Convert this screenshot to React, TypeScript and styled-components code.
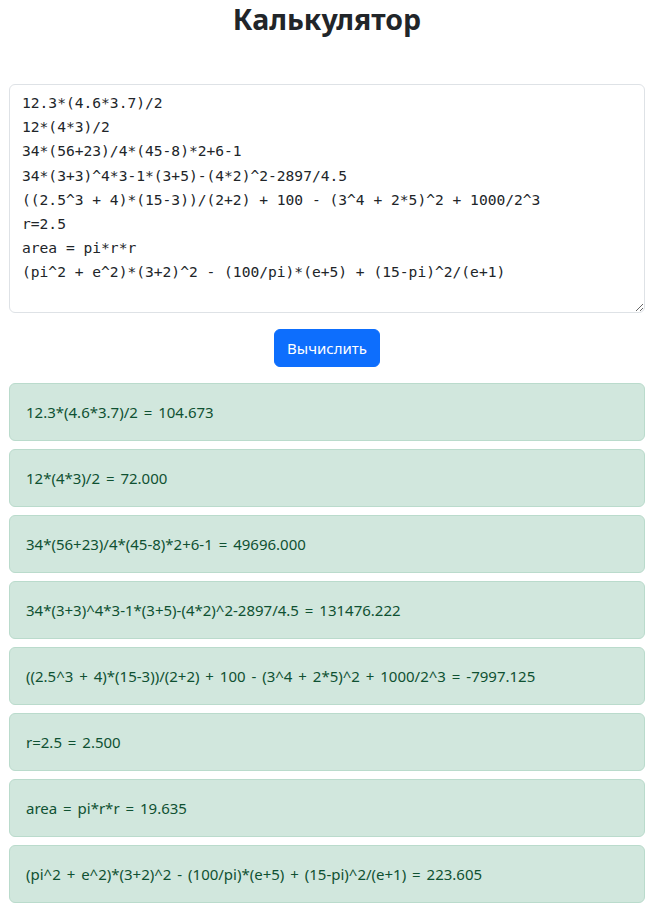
import React from "react";
import styled, { createGlobalStyle } from "styled-components";

const GlobalStyle = createGlobalStyle`
  body {
    margin: 0;
    background: #fff;
    color: #212529;
    font-family: "Noto Sans", "Open Sans", sans-serif;
    font-size: 16px;
    line-height: 1.5;
  }
  * { box-sizing: border-box; }
`;

const Page = styled.div`
  padding: 0 8px 16px 9px;
`;

const Title = styled.h1`
  margin: 0 0 45px;
  text-align: center;
  font-size: 28.5px;
  font-weight: 700;
  line-height: 39px;
  color: #212529;
`;

const Editor = styled.textarea`
  display: block;
  width: 100%;
  height: 229px;
  padding: 6px 12px;
  border: 1px solid #dee2e6;
  border-radius: 6px;
  font-family: "DejaVu Sans Mono", "Liberation Mono", monospace;
  font-size: 14.6px;
  line-height: 24.2px;
  color: #212529;
  background: #fff;
  outline: none;
`;

const Actions = styled.div`
  display: flex;
  justify-content: center;
  margin: 16px 0;
`;

const Button = styled.button`
  height: 38px;
  padding: 0 12px;
  border: 1px solid #0d6efd;
  border-radius: 6px;
  background: #0d6efd;
  color: #fff;
  font-family: inherit;
  font-size: 15px;
  cursor: pointer;
`;

const Results = styled.div`
  display: flex;
  flex-direction: column;
  gap: 8px;
`;

const Result = styled.div`
  padding: 16px;
  border: 1px solid #badbcc;
  border-radius: 6px;
  background: #d1e7dd;
  color: #0f5132;
  line-height: 24px;
  font-size: 15px;
  word-spacing: 2px;
`;

const source = [
  "12.3*(4.6*3.7)/2",
  "12*(4*3)/2",
  "34*(56+23)/4*(45-8)*2+6-1",
  "34*(3+3)^4*3-1*(3+5)-(4*2)^2-2897/4.5",
  "((2.5^3 + 4)*(15-3))/(2+2) + 100 - (3^4 + 2*5)^2 + 1000/2^3",
  "r=2.5",
  "area = pi*r*r",
  "(pi^2 + e^2)*(3+2)^2 - (100/pi)*(e+5) + (15-pi)^2/(e+1)",
];

const results = [
  "104.673",
  "72.000",
  "49696.000",
  "131476.222",
  "-7997.125",
  "2.500",
  "19.635",
  "223.605",
];

const App = () => {
  return (
    <Page>
      <GlobalStyle />
      <Title>Калькулятор</Title>
      <Editor defaultValue={source.join("\n")} spellCheck={false} />
      <Actions>
        <Button>Вычислить</Button>
      </Actions>
      <Results>
        {source.map((expr, i) => (
          <Result key={i}>
            {expr} = {results[i]}
          </Result>
        ))}
      </Results>
    </Page>
  );
};

export default App;
